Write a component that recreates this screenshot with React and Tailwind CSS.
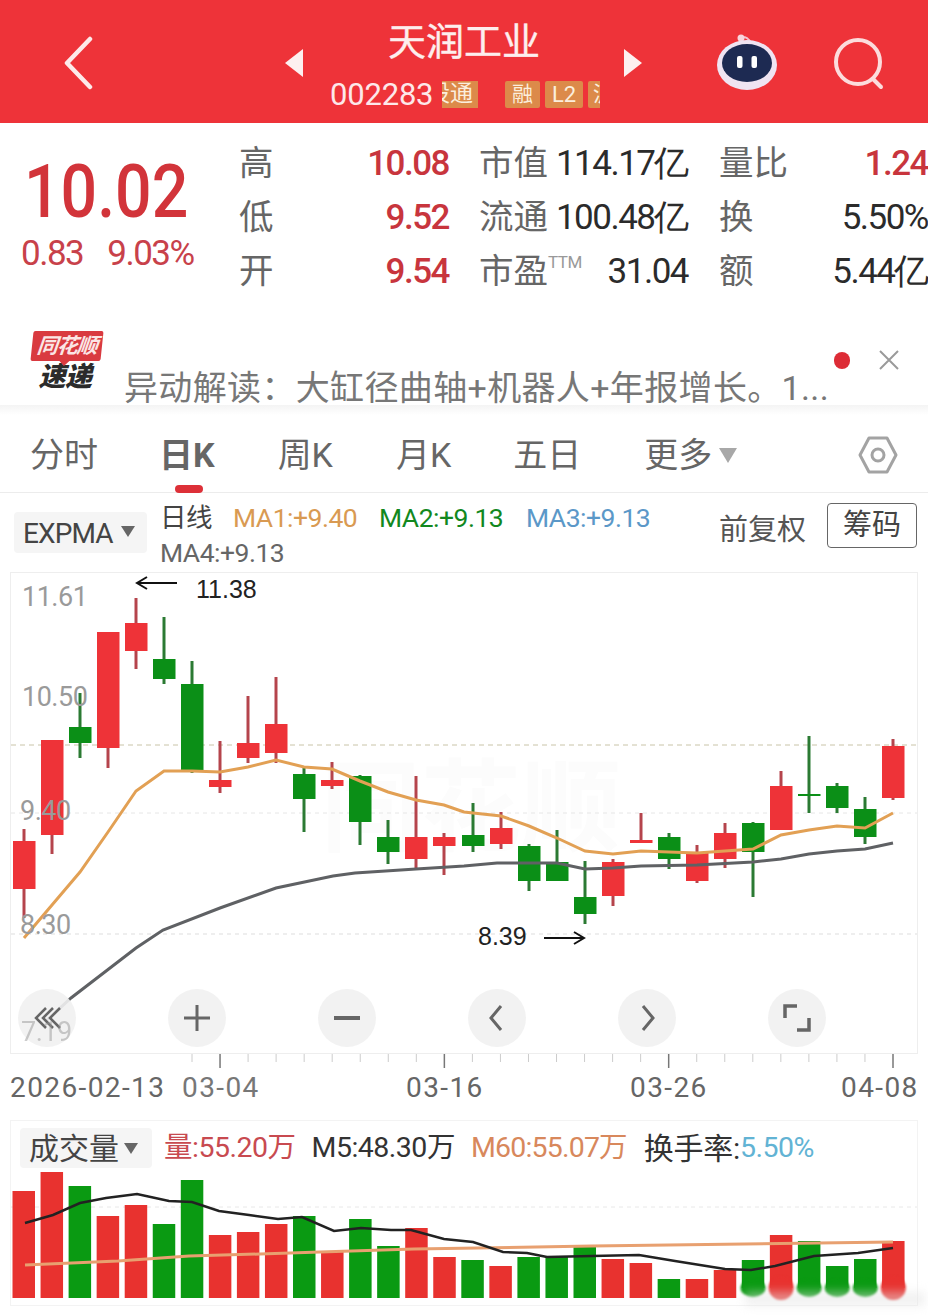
const FONT = "font-['Roboto','Noto_Sans_CJK_SC',sans-serif]";

const RED = "#ee3338";
const GREEN = "#0b8f17";

// [center x, color, high, body top, body bottom, low]
const candles = [
  [24, "r", 829, 841, 889, 918],
  [52, "r", 740, 740, 835, 854],
  [80, "g", 693, 727, 743, 758],
  [108, "r", 632, 632, 748, 768],
  [136, "r", 598, 623, 651, 669],
  [164, "g", 617, 659, 679, 684],
  [192, "g", 661, 684, 771, 773],
  [220, "r", 741, 780, 787, 793],
  [248, "r", 696, 743, 758, 763],
  [276, "r", 677, 724, 753, 763],
  [304, "g", 768, 774, 799, 832],
  [332, "r", 762, 780, 786, 789],
  [360, "g", 775, 776, 822, 845],
  [388, "g", 820, 837, 852, 864],
  [416, "r", 776, 837, 859, 868],
  [444, "r", 833, 837, 846, 875],
  [473, "g", 803, 835, 846, 852],
  [501, "r", 812, 828, 844, 849],
  [529, "g", 844, 846, 881, 891],
  [557, "g", 830, 862, 881, 881],
  [585, "g", 861, 897, 914, 924],
  [613, "r", 859, 862, 896, 906],
  [641, "r", 813, 840, 843, 843],
  [669, "g", 833, 837, 859, 869],
  [697, "r", 845, 853, 881, 883],
  [725, "r", 823, 833, 859, 868],
  [753, "g", 822, 823, 852, 897],
  [781, "r", 771, 786, 830, 830],
  [809, "g", 736, 794, 796, 813],
  [837, "g", 783, 786, 808, 813],
  [865, "g", 797, 809, 837, 844],
  [893, "r", 739, 746, 798, 800],
];

const ma1 = "24,938 52,905 80,872 108,832 136,791 164,771 192,771 220,772 248,767 276,760 304,767 332,769 360,781 388,792 416,800 444,805 464,812 501,816 529,826 557,838 585,851 613,854 641,851 669,852 697,853 725,851 753,849 781,835 809,830 837,826 865,828 893,813";
const ma2 = "45,1022 71,998 136,948 163,930 220,908 276,888 333,876 355,873 416,869 464,866 497,863 557,863 585,869 613,868 641,866 697,865 753,862 781,859 809,854 837,851 865,849 893,843";

// [color, bar top]
const volume = [
  ["r", 1191], ["r", 1172], ["g", 1186], ["r", 1216], ["r", 1205], ["g", 1224], ["g", 1180], ["r", 1235],
  ["r", 1232], ["r", 1224], ["g", 1216], ["r", 1252], ["g", 1219], ["g", 1246], ["r", 1228], ["r", 1257],
  ["g", 1260], ["r", 1266], ["g", 1257], ["g", 1257], ["g", 1246], ["r", 1259], ["r", 1263], ["g", 1279],
  ["r", 1279], ["r", 1270], ["g", 1260], ["r", 1235], ["g", 1241], ["g", 1266], ["g", 1259], ["r", 1241],
];

const volM5 = "25,1223 53,1215 80,1203 106,1198 137,1194 169,1201 192,1202 219,1211 249,1215 278,1219 302,1217 334,1231 361,1228 391,1230 411,1230 444,1239 473,1242 503,1252 527,1253 547,1257 592,1256 639,1255 675,1261 725,1269 751,1270 775,1266 814,1256 858,1253 893,1248";
const volM60 = "25,1265 118,1261 189,1256 260,1254 320,1252 414,1249 592,1246 893,1242";

const stats = [
  ["高", "10.08", "市值", "114.17亿", "量比", "1.24"],
  ["低", "9.52", "流通", "100.48亿", "换", "5.50%"],
  ["开", "9.54", "市盈", "31.04", "额", "5.44亿"],
];

const tickXs = Array.from({ length: 26 }, (_, i) => 192 + i * 28.04);

function Robot() {
  return (
    <svg width="64" height="60" viewBox="0 0 64 60">
      <path d="M26 8 q4 -4 8 1 q2 2 1 6" fill="none" stroke="#f3c4d0" strokeWidth="2" />
      <circle cx="26" cy="7" r="3.5" fill="#f8d5dc" />
      <ellipse cx="32" cy="34" rx="30" ry="25" fill="#efe4f2" />
      <ellipse cx="32" cy="32" rx="25" ry="19" fill="#1d2a52" />
      <rect x="22" y="25" width="5.5" height="12" rx="2" fill="#fff" />
      <rect x="36.5" y="25" width="5.5" height="12" rx="2" fill="#fff" />
    </svg>
  );
}

function Header() {
  return (
    <header className="flex h-[123px] shrink-0 items-center bg-[#ee3339] text-white">
      <svg className="ml-[62px] mt-[2px] shrink-0" width="32" height="54" viewBox="0 0 32 54">
        <path d="M28 3 L5 27 L28 51" fill="none" stroke="#fdeaea" strokeWidth="4.5" strokeLinecap="round" strokeLinejoin="round" />
      </svg>
      <div className="ml-[191px] mt-[2px] h-0 w-0 border-y-[14px] border-r-[18px] border-y-transparent border-r-[#fdf0f0]" />
      <div className="ml-[27px] mt-[2px] flex w-[270px] flex-col items-start">
        <div className="ml-[58px] h-[52px] text-[38px] leading-[52px] text-[#fdeeee] [-webkit-text-stroke:0.4px_#fdeeee]">天润工业</div>
        <div className="mt-[12px] flex h-[30px] items-center">
          <span className="w-[112px] font-['Roboto',sans-serif] text-[31px] leading-[30px] tracking-[-0.2px] text-[#fde8ea]">002283</span>
          <span className="flex h-[27px] w-[36px] items-center justify-end overflow-hidden whitespace-nowrap bg-[#dc8a4a] pr-[5px] text-[23px] text-[#fbeedd]">股通</span>
          <span className="ml-[27px] flex h-[27px] w-[35px] items-center justify-center rounded-[2px] bg-[#dc8a4a] text-[21px] text-[#fbeedd]">融</span>
          <span className="ml-[5px] flex h-[27px] w-[38px] items-center justify-center rounded-[2px] bg-[#dc8a4a] text-[22px] text-[#fbeedd]">L2</span>
          <span className="ml-[5px] flex h-[27px] w-[12px] items-center overflow-hidden whitespace-nowrap rounded-l-[2px] bg-[#dc8a4a] pl-[5px] text-[21px] text-[#fbeedd]">沪</span>
        </div>
      </div>
      <div className="ml-[24px] mt-[2px] h-0 w-0 border-y-[14px] border-l-[18px] border-y-transparent border-l-[#fdf0f0]" />
      <div className="ml-[73px] -mt-[1px]">
        <Robot />
      </div>
      <svg className="ml-[54px] mt-[4px]" width="54" height="52" viewBox="0 0 54 52">
        <circle cx="25" cy="24" r="22" fill="none" stroke="#fcdcdc" strokeWidth="4" />
        <path d="M40 41 L48 49" stroke="#fcdcdc" strokeWidth="4" strokeLinecap="round" />
      </svg>
    </header>
  );
}

function Quote() {
  const num = "font-['Roboto',sans-serif] text-[35px] tracking-[-1.5px]";
  return (
    <section className="flex h-[197px] shrink-0 pt-[14px]">
      <div className="flex w-[239px] shrink-0 flex-col pl-[24px]">
        <div className="mt-[12px] h-[85px] origin-left scale-x-[0.87] font-['Roboto',sans-serif] text-[74px] font-medium leading-[86px] text-[#d2343a]">10.02</div>
        <div className="-ml-[3px] flex h-[40px] font-['Roboto',sans-serif] text-[35px] leading-[40px] tracking-[-1.5px] text-[#c8414a]">
          <span>0.83</span>
          <span className="ml-[24px]">9.03%</span>
        </div>
      </div>
      <div className="flex flex-col">
        {stats.map((row, i) => (
          <div key={row[0]} className="flex h-[54px] items-center text-[34.5px]">
            <div className="flex w-[210px] items-center justify-between">
              <span className="text-[#666]">{row[0]}</span>
              <span className={`${num} font-medium text-[#c8353d]`}>{row[1]}</span>
            </div>
            <div className="ml-[30px] flex w-[209px] items-center justify-between">
              <span className="flex items-start text-[#666]">
                {row[2]}
                {i === 2 ? <sup className="mt-[16px] text-[17px] leading-none tracking-[-0.5px] text-[#999]">TTM</sup> : null}
              </span>
              <span className={`${num} text-[#2b2b2b]`}>{row[3]}</span>
            </div>
            <div className="ml-[31px] flex w-[209px] items-center justify-between">
              <span className="text-[#666]">{row[4]}</span>
              <span className={i === 0 ? `${num} font-medium text-[#c8353d]` : `${num} tracking-[-0.5px] text-[#2b2b2b]`}>{row[5]}</span>
            </div>
          </div>
        ))}
      </div>
    </section>
  );
}

function News() {
  return (
    <section className="flex h-[85px] shrink-0 items-start">
      <div className="ml-[30px] mt-[11px] flex w-[74px] shrink-0 flex-col items-center">
        <div className="relative flex h-[30px] w-[70px] -skew-x-6 items-center justify-center rounded-[2px] bg-[#d93a40] text-[21px] font-bold italic leading-none tracking-[-1px] text-[#fbe5e5]">
          同花顺
          <span className="absolute -bottom-[5px] left-[29px] h-0 w-0 border-x-[5px] border-t-[5px] border-x-transparent border-t-[#d93a40]" />
        </div>
        <div className="-ml-[4px] mt-[3px] text-[27px] font-black italic leading-[26px] tracking-[-0.5px] text-[#2b2b2b]">速递</div>
      </div>
      <div className="ml-[20px] mt-[47px] w-[720px] whitespace-nowrap text-[34px] leading-[42px] tracking-[0.35px] text-[#777]">异动解读：大缸径曲轴+机器人+年报增长。1...</div>
      <div className="absolute left-[834px] top-[352px] h-[17px] w-[16px] rounded-full bg-[#dd2c36]" />
      <svg className="absolute left-[878px] top-[349px]" width="22" height="22" viewBox="0 0 22 22">
        <path d="M2 2 L20 20 M20 2 L2 20" stroke="#9a9a9a" strokeWidth="2" />
      </svg>
    </section>
  );
}

function Tabs() {
  const tab = "text-[34px] leading-[44px] text-[#666] whitespace-nowrap";
  return (
    <section className="relative flex h-[78px] shrink-0 items-center border-b border-[#ececec] bg-white pt-[3px]">
      <span className={`${tab} ml-[30px]`}>分时</span>
      <span className={`${tab} ml-[61px] font-bold text-[#2c2c2c]`}>日K</span>
      <span className={`${tab} ml-[63px]`}>周K</span>
      <span className={`${tab} ml-[63px]`}>月K</span>
      <span className={`${tab} ml-[62px]`}>五日</span>
      <span className={`${tab} ml-[63px]`}>更多</span>
      <span className="ml-[7px] h-0 w-0 border-x-[9px] border-t-[15px] border-x-transparent border-t-[#a8a8a8]" />
      <svg className="ml-[121px]" width="40" height="40" viewBox="0 0 40 40">
        <path d="M11 3 H29 L38 20 L29 37 H11 L2 20 Z" fill="none" stroke="#a3a3a3" strokeWidth="3" strokeLinejoin="round" />
        <circle cx="20" cy="20" r="6" fill="none" stroke="#a3a3a3" strokeWidth="3" />
      </svg>
      <span className="absolute bottom-[-1px] left-[175px] h-[8px] w-[28px] rounded-full bg-[#dd3038]" />
    </section>
  );
}

function Toolbar() {
  return (
    <section className="flex h-[79px] shrink-0 items-start">
      <div className="ml-[14px] mt-[19px] flex h-[41px] w-[133px] shrink-0 items-center rounded-[4px] bg-[#f5f5f5] pl-[9px] pt-[3px] font-['Roboto',sans-serif] text-[28px] tracking-[-0.9px] text-[#444]">
        EXPMA
        <span className="ml-[8px] mt-[-6px] h-0 w-0 border-x-[7px] border-t-[11px] border-x-transparent border-t-[#666]" />
      </div>
      <div className="ml-[13px] mt-[7px] flex w-[540px] flex-col font-['Roboto','Noto_Sans_CJK_SC',sans-serif] text-[26.5px] leading-[35px] tracking-[-0.5px]">
        <div className="flex whitespace-nowrap">
          <span className="w-[73px] text-[#444]">日线</span>
          <span className="w-[146px] text-[#d99a52]">MA1:+9.40</span>
          <span className="w-[147px] text-[#12881e]">MA2:+9.13</span>
          <span className="text-[#5b98c8]">MA3:+9.13</span>
        </div>
        <div className="text-[#666]">MA4:+9.13</div>
      </div>
      <span className="ml-[19px] mt-[18px] whitespace-nowrap text-[29px] leading-[38px] text-[#555]">前复权</span>
      <span className="ml-[21px] mt-[10px] flex h-[45px] w-[90px] shrink-0 items-center justify-center rounded-[4px] border border-[#666] text-[29px] text-[#444]">筹码</span>
    </section>
  );
}

function CircleButton({ children }) {
  return (
    <div className="flex h-[58px] w-[58px] items-center justify-center rounded-full bg-[#f1f1f1]/90">
      <svg width="30" height="30" viewBox="0 0 30 30" fill="none" stroke="#666" strokeWidth="3">
        {children}
      </svg>
    </div>
  );
}

function PriceChart() {
  const label = "absolute font-['Roboto',sans-serif] text-[27px] leading-none tracking-[-0.5px] text-[#9a9a9a]";
  return (
    <section className="relative ml-[10px] h-[482px] w-[908px] shrink-0 border border-[#eeeeee] bg-white">
      <div className="absolute left-[310px] top-[186px] whitespace-nowrap text-[100px] font-bold leading-none text-[#fcfcfc]">同花顺</div>
      <svg className="absolute left-[-11px] top-[-573px]" width="928" height="1060" viewBox="0 0 928 1060">
        <line x1="11" y1="745" x2="917" y2="745" stroke="#c9c4a8" strokeDasharray="5 4" />
        <line x1="11" y1="813" x2="917" y2="813" stroke="#e6e6e6" strokeDasharray="4 4" />
        <line x1="11" y1="934" x2="917" y2="934" stroke="#dddddd" strokeDasharray="4 4" />
        {candles.map(([x, c, high, top, bottom, low]) => (
          <g key={x}>
            <line x1={x} x2={x} y1={high} y2={low} stroke={c === "r" ? "#b5444c" : "#2b7a33"} strokeWidth="3" />
            <rect x={x - 11} y={top} width="22.5" height={Math.max(bottom - top, 2)} fill={c === "r" ? RED : GREEN} />
          </g>
        ))}
        <polyline points={ma2} fill="none" stroke="#5f6164" strokeWidth="3" />
        <polyline points={ma1} fill="none" stroke="#e2a054" strokeWidth="3" />
      </svg>
      <span className={`${label} left-[11px] top-[11px]`}>11.61</span>
      <span className={`${label} left-[11px] top-[111px]`}>10.50</span>
      <span className={`${label} left-[9px] top-[225px]`}>9.40</span>
      <span className={`${label} left-[9px] top-[339px]`}>8.30</span>
      <svg className="absolute left-[124px] top-[0px]" width="44" height="20" viewBox="0 0 44 20" fill="none" stroke="#111" strokeWidth="2">
        <path d="M2 10 H42 M12 4 L2 10 L12 16" />
      </svg>
      <span className="absolute left-[185px] top-[1px] font-['Liberation_Sans',sans-serif] text-[25px] leading-[30px] text-[#222]">11.38</span>
      <span className="absolute left-[467px] top-[348px] font-['Liberation_Sans',sans-serif] text-[25px] leading-[30px] text-[#222]">8.39</span>
      <svg className="absolute left-[532px] top-[355px]" width="44" height="20" viewBox="0 0 44 20" fill="none" stroke="#111" strokeWidth="2">
        <path d="M1 10 H41 M31 4 L41 10 L31 16" />
      </svg>
      <div className="absolute left-[7px] top-[416px] flex w-[808px] justify-between">
        <CircleButton>
          <path d="M14 5 L4 15 L14 25 M21 5 L11 15 L21 25 M28 5 L18 15 L28 25" strokeWidth="2.5" />
        </CircleButton>
        <CircleButton>
          <path d="M15 2 V28 M2 15 H28" />
        </CircleButton>
        <CircleButton>
          <path d="M2 15 H28" strokeWidth="4" />
        </CircleButton>
        <CircleButton>
          <path d="M19 3 L9 15 L19 27" />
        </CircleButton>
        <CircleButton>
          <path d="M11 3 L21 15 L11 27" />
        </CircleButton>
        <CircleButton>
          <path d="M15 3 H3 V15 M27 15 V27 H15" strokeWidth="3.5" />
        </CircleButton>
      </div>
      <span className={`${label} left-[10px] top-[446px] text-[25px] opacity-50`}>7.19</span>
    </section>
  );
}

function Axis() {
  const date = "absolute top-[19px] font-['Roboto',sans-serif] text-[28px] leading-[30px] tracking-[1.4px] text-[#666]";
  return (
    <section className="relative h-[66px] shrink-0">
      <svg className="absolute left-0 top-0" width="928" height="20" viewBox="0 0 928 20">
        {tickXs.map((x, i) => (
          <line key={x} x1={x} x2={x} y1="0" y2={(i - 1) % 8 === 0 ? 14 : 8} stroke={(i - 1) % 8 === 0 ? "#777" : "#ccc"} strokeWidth={(i - 1) % 8 === 0 ? 1.5 : 1} />
        ))}
      </svg>
      <span className={`${date} left-[10px] text-[#444]`}>2026-02-13</span>
      <span className={`${date} left-[182px] text-[#777]`}>03-04</span>
      <span className={`${date} left-[406px]`}>03-16</span>
      <span className={`${date} left-[630px]`}>03-26</span>
      <span className={`${date} left-[841px]`}>04-08</span>
    </section>
  );
}

function VolumeChart() {
  return (
    <section className="relative flex-1 pt-[8px]">
      <div className="absolute left-[10px] top-0 h-[186px] w-[908px] border border-[#f3f3f3]" />
      <div className="relative ml-[10px] flex h-[40px] items-center whitespace-nowrap font-['Roboto','Noto_Sans_CJK_SC',sans-serif] text-[28.5px] tracking-[-0.5px]">
        <div className="ml-[10px] flex h-[40px] w-[132px] items-center rounded-[4px] bg-[#f5f5f5] pl-[9px] text-[30px] tracking-normal text-[#444]">
          成交量
          <span className="ml-[5px] h-0 w-0 border-x-[7px] border-t-[11px] border-x-transparent border-t-[#666]" />
        </div>
        <span className="ml-[12px] text-[#c84a50]">量:55.20万</span>
        <span className="ml-[16px] text-[#333]">M5:48.30万</span>
        <span className="ml-[16px] tracking-[-0.8px] text-[#d8885c]">M60:55.07万</span>
        <span className="ml-[17px] text-[30px] tracking-[-0.3px] text-[#333]">换手率:</span>
        <span className="text-[#62b3d4]">5.50%</span>
      </div>
      <svg className="absolute left-0 top-[-1120px]" width="928" height="1315" viewBox="0 0 928 1315">
        <line x1="11" y1="1207" x2="917" y2="1207" stroke="#e8e8e8" strokeDasharray="4 4" />
        {volume.map(([c, top], i) => {
          const x = 12.5 + i * 28.05;
          const fill = c === "r" ? "#e8322f" : "#0a9a12";
          // the last bars are smeared at the foot by the picture's watermark
          return i < 26 ? (
            <rect key={i} x={x} y={top} width="22.5" height={1298 - top} fill={fill} />
          ) : (
            <g key={i}>
              <rect x={x} y={top} width="22.5" height={1288 - top} fill={fill} />
              <ellipse className="blur-[1px]" cx={x + 11.25} cy="1288" rx="12.5" ry={c === "r" ? 12 : 9} fill={fill} />
            </g>
          );
        })}
        <polyline points={volM60} fill="none" stroke="#e8a070" strokeWidth="3" />
        <polyline points={volM5} fill="none" stroke="#222" strokeWidth="2.5" />
      </svg>
      <div className="absolute left-[745px] top-[172px] h-[14px] w-[180px] bg-[#e4e4e4]/50 blur-[5px]" />
    </section>
  );
}

export default function App() {
  return (
    <div className={`relative flex h-[1315px] w-[928px] flex-col overflow-hidden bg-white ${FONT}`}>
      <Header />
      <Quote />
      <News />
      <div className="h-[10px] shrink-0 bg-gradient-to-b from-[#f4f4f4] to-white" />
      <Tabs />
      <Toolbar />
      <PriceChart />
      <Axis />
      <VolumeChart />
    </div>
  );
}
